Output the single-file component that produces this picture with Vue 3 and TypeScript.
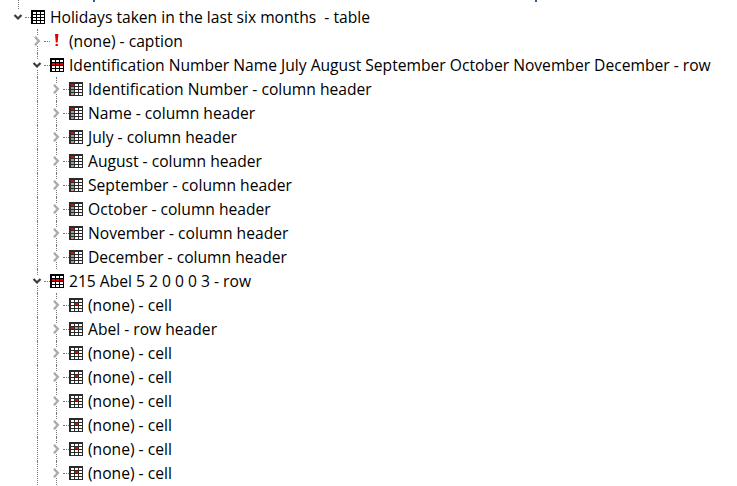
<script setup lang="ts">
type Kind = 'table' | 'caption' | 'row' | 'colh' | 'cell' | 'rowh'
interface Item { depth: number; label: string; kind: Kind; open: boolean }
const mk = (depth: number, label: string, kind: Kind, open = false): Item => ({ depth, label, kind, open })
const items: Item[] = [
  mk(0, 'Holidays taken in the last six months\u00a0 - table', 'table', true),
  mk(1, '(none) - caption', 'caption'),
  mk(1, 'Identification Number Name July August September October November December - row', 'row', true),
  ...['Identification Number', 'Name', 'July', 'August', 'September', 'October', 'November', 'December'].map((n) => mk(2, `${n} - column header`, 'colh')),
  mk(1, '215 Abel 5 2 0 0 0 3 - row', 'row', true),
  mk(2, '(none) - cell', 'cell'),
  mk(2, 'Abel - row header', 'rowh'),
  ...Array.from({ length: 6 }, () => mk(2, '(none) - cell', 'cell')),
]
const colX = [2, 6, 10]
const rowY = [2, 5, 8, 11]
function cellFill(kind: Kind, c: number, r: number): string {
  if (kind === 'row' && r === 1) return '#f00000'
  if (kind === 'cell' && c === 1 && r === 1) return '#f00000'
  if (kind === 'colh' && c === 0) return r === 0 ? '#f00000' : '#a0a0a0'
  if (kind === 'rowh' && r === 1) return c === 0 ? '#f00000' : '#a0a0a0'
  return '#fff'
}
</script>

<template>
  <div class="tree">
    <div class="clip">
      <span class="tail t1"></span>
      <span class="tail t2"></span>
      <span class="guide g0"></span>
    </div>
    <div v-for="(it, i) in items" :key="i" class="row" :class="`d${it.depth}`">
      <span v-if="it.depth >= 1" class="guide g1"></span>
      <span v-if="it.depth >= 2" class="guide g2"></span>
      <svg class="chev" width="10" height="10" viewBox="0 0 10 10">
        <path v-if="it.open" d="M1.5 3 L5 6.5 L8.5 3" fill="none" stroke="#3c3c3c" stroke-width="2.2" />
        <path v-else d="M3 0.8 L6.8 5 L3 9.2" fill="none" stroke="#ababab" stroke-width="2.4" />
      </svg>
      <span class="dash"></span>
      <svg v-if="it.kind === 'caption'" class="icon" width="14" height="14" viewBox="0 0 14 14">
        <path d="M5 0h3.4l-.8 8.5H5.8z" fill="#e00000" />
        <rect x="5.6" y="10" width="2.2" height="2" fill="#e00000" />
      </svg>
      <svg v-else class="icon" width="14" height="14" viewBox="0 0 14 14" shape-rendering="crispEdges">
        <rect width="14" height="14" :fill="it.depth === 2 ? '#2a2a2a' : '#000'" />
        <template v-for="(y, r) in rowY" :key="r">
          <rect v-for="(x, c) in colX" :key="c" :x="x" :y="y" width="3" height="2" :fill="cellFill(it.kind, c, r)" />
        </template>
      </svg>
      <span class="label">{{ it.label }}</span>
    </div>
  </div>
</template>

<style scoped>
.tree {
  width: 737px;
  height: 486px;
  overflow: hidden;
  background: #fff;
  color: #000;
  font-family: "Open Sans", "Noto Sans", sans-serif;
  font-size: 15.63px;
  position: relative;
}
.clip { height: 5px; position: relative; }
.tail { position: absolute; top: 0; width: 2px; height: 2px; background: #2b5c8a; }
.t1 { left: 93px; }
.t2 { left: 535px; }
.row {
  height: 24px;
  display: flex;
  align-items: center;
  position: relative;
}
.d0 { padding-left: 13px; }
.d1 { padding-left: 32px; }
.d2 { padding-left: 51px; }
.chev { flex: none; position: relative; z-index: 1; background: #fff; }
.dash { width: 6px; height: 0; margin-left: 2px; border-top: 1px dotted #777; flex: none; }
.icon { flex: none; margin-right: 5px; }
.label { white-space: nowrap; }
.guide {
  position: absolute;
  top: 0;
  bottom: 0;
  width: 0;
  border-left: 1px dotted #777;
}
.g0 { left: 18px; height: 9px; bottom: auto; }
.g1 { left: 37px; }
.g2 { left: 56px; }
</style>

<style>
html, body { margin: 0; background: #fff; }
</style>
